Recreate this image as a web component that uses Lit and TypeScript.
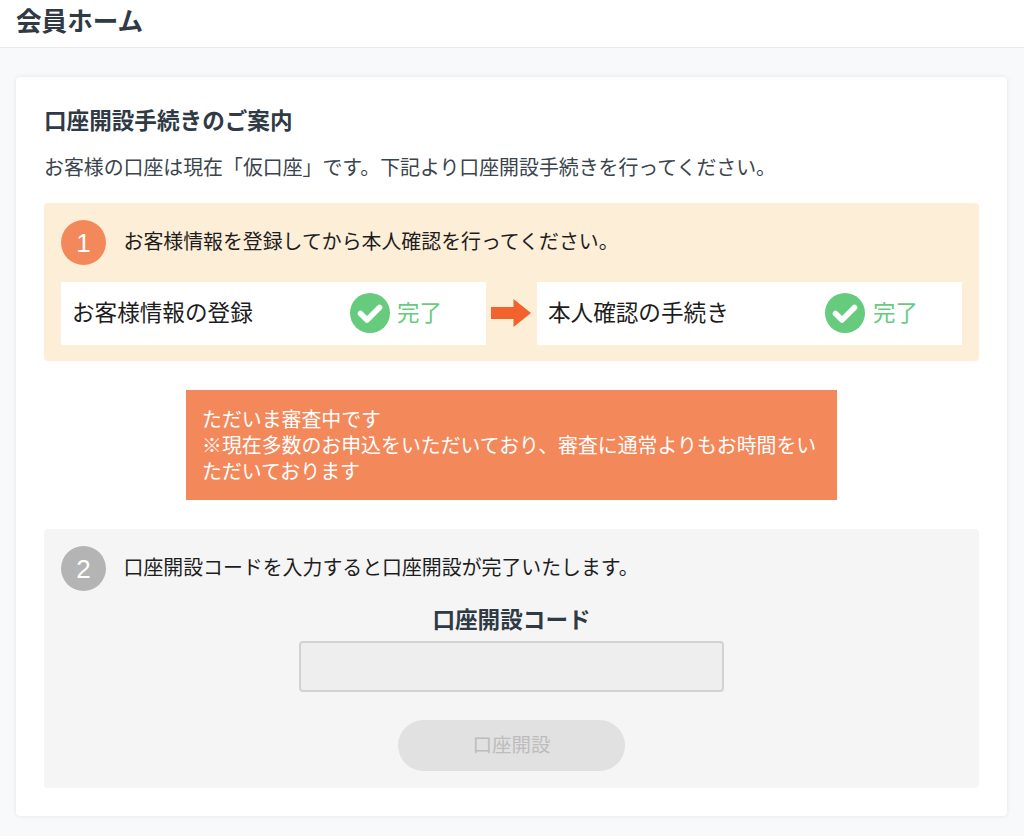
import { LitElement, html, css } from "lit";
import { customElement } from "lit/decorators.js";

const check = html`<svg class="check" viewBox="0 0 40 40" aria-hidden="true"><circle cx="20" cy="20" r="20" fill="#66cb7c"></circle><path d="M10.5 20.5 L17 27 L29.5 14.5" fill="none" stroke="#fff" stroke-width="5.6" stroke-linecap="round" stroke-linejoin="round"></path></svg>`;

@customElement("app-root")
export class AppRoot extends LitElement {
  static styles = css`
    :host {
      display: block;
      height: 836px;
      overflow: hidden;
      background: #f8f9fa;
      font-family: "Noto Sans CJK JP", "Liberation Sans", sans-serif;
      color: #2f3a44;
    }
    .top {
      height: 47px;
      background: #fff;
      border-bottom: 1px solid #e9eaec;
      padding-left: 16px;
      display: flex;
      align-items: center;
      font-size: 25.6px;
      font-weight: 700;
      line-height: 1;
    }
    .top span { padding-bottom: 7px; }
    .page { padding: 29px 17px 0 16px; }
    .card {
      background: #fff;
      border-radius: 4px;
      box-shadow: 0 0 4px rgba(30, 40, 60, 0.1);
      height: 739px;
      box-sizing: border-box;
      padding: 28px 28px 0 28px;
      display: flex;
      flex-direction: column;
    }
    h2 { margin: 0; font-size: 22.6px; line-height: 30px; font-weight: 700; color: #2f3a44; }
    .lead { margin: 18px 0 0; font-size: 19.9px; line-height: 28px; color: #3a444d; }
    .step {
      border-radius: 4px;
      padding: 17px;
      box-sizing: border-box;
    }
    .s1 { background: #fdeed8; height: 158px; margin-top: 22px; }
    .s2 { background: #f5f5f5; height: 259px; margin-top: 29px; }
    .head { display: flex; align-items: center; gap: 18px; font-size: 19.9px; line-height: 26px; color: #1d1d1d; }
    .head .txt { padding-bottom: 4px; margin-left: -0.5px; }
    .num {
      width: 45px; height: 45px; border-radius: 50%;
      display: flex; align-items: center; justify-content: center;
      color: #fff; font-size: 26px;
      font-family: "Liberation Sans", sans-serif;
      flex: none;
    }
    .s1 .num { background: #f3885b; }
    .s2 .num { background: #b4b4b4; }
    .flow { display: flex; align-items: center; margin-top: 17px; }
    .box {
      flex: none; width: 425px; height: 63px;
      background: #fff;
      display: flex; align-items: center;
      padding-left: 12px; box-sizing: border-box;
      font-size: 22.6px; color: #1d1d1d;
    }
    .box .name { width: 277px; padding-bottom: 5px; margin-left: -1px; margin-right: 1px; }
    .box.b2 .name { margin-right: 0; }
    .check { width: 40px; height: 40px; flex: none; margin-bottom: 1px; }
    .done { color: #66cb7c; font-size: 22.5px; margin-left: 7px; padding-bottom: 5px; }
    .b2 .done { margin-left: 8px; }
    .arrow { width: 51px; padding-left: 5px; box-sizing: border-box; display: flex; flex: none; }
    .arrow svg { width: 40px; height: 28px; margin-bottom: 2px; }
    .notice {
      align-self: center;
      width: 651px; height: 110px;
      box-sizing: border-box;
      margin-top: 29px;
      padding: 16px;
      background: #f3885b;
      color: #fff;
      font-size: 19.9px;
      line-height: 26px;
    }
    .form { display: flex; flex-direction: column; align-items: center; }
    label { font-size: 22.6px; font-weight: 700; line-height: 30px; margin-top: 13px; color: #2f3a44; }
    .input {
      margin-top: 7px;
      width: 425px; height: 51px;
      box-sizing: border-box;
      background: #eeeeee;
      border: 2px solid #d2d2d2;
      border-radius: 4px;
      display: block;
      padding: 0;
    }
    button {
      margin-top: 28px;
      width: 227px; height: 51px;
      border: none; border-radius: 26px;
      background: #e1e1e1;
      color: #bcbcbc;
      font: inherit;
      font-size: 19.5px;
      font-weight: 400;
      padding: 0 0 5px;
    }
  `;

  render() {
    return html`
      <div class="top"><span>会員ホーム</span></div>
      <div class="page">
        <div class="card">
          <h2>口座開設手続きのご案内</h2>
          <p class="lead">お客様の口座は現在「仮口座」です。下記より口座開設手続きを行ってください。</p>
          <section class="step s1">
            <div class="head"><div class="num">1</div><div class="txt">お客様情報を登録してから本人確認を行ってください。</div></div>
            <div class="flow">
              <div class="box"><span class="name">お客様情報の登録</span>${check}<span class="done">完了</span></div>
              <div class="arrow"><svg viewBox="0 0 40 28" aria-hidden="true"><path d="M0 8 H22.5 V0 L40 14 L22.5 28 V20 H0 Z" fill="#f2622c"></path></svg></div>
              <div class="box b2"><span class="name">本人確認の手続き</span>${check}<span class="done">完了</span></div>
            </div>
          </section>
          <div class="notice">ただいま審査中です<br />※現在多数のお申込をいただいており、審査に通常よりもお時間をいただいております</div>
          <section class="step s2">
            <div class="head"><div class="num">2</div><div class="txt">口座開設コードを入力すると口座開設が完了いたします。</div></div>
            <div class="form">
              <label for="code">口座開設コード</label>
              <input id="code" class="input" disabled />
              <button disabled>口座開設</button>
            </div>
          </section>
        </div>
      </div>
    `;
  }
}
